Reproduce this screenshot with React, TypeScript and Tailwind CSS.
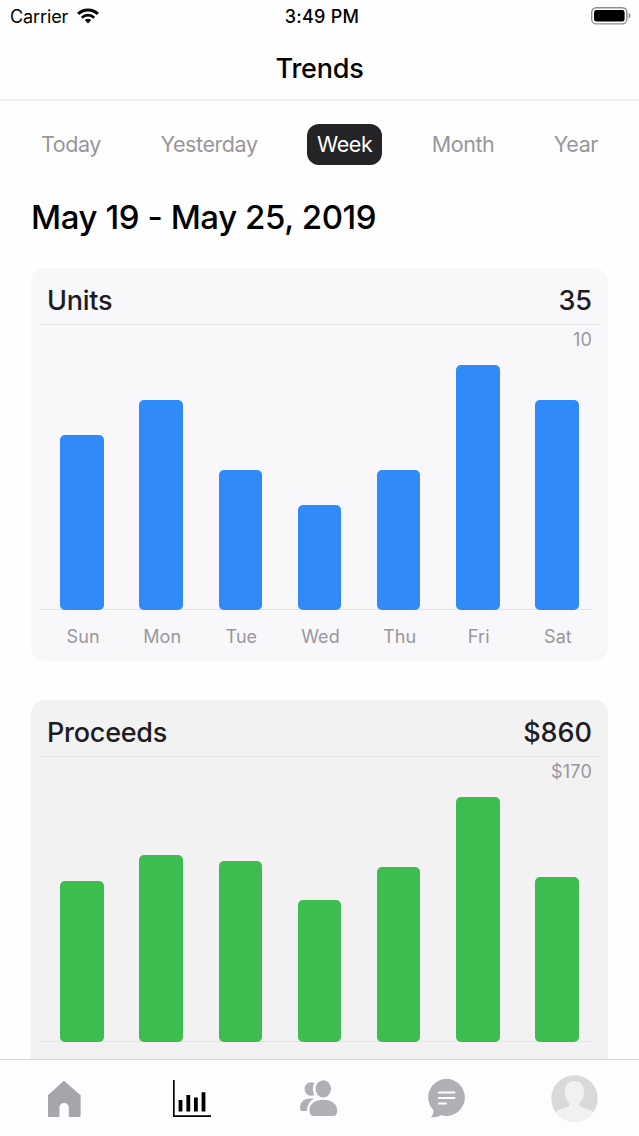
type Bar = { day: string; height: string };

type ChartProps = {
  title: string;
  total: string;
  max: string;
  card: string;
  fill: string;
  bars: Bar[];
  showDays?: boolean;
};

const units: Bar[] = [
  { day: "Sun", height: "h-[175px]" },
  { day: "Mon", height: "h-[210px]" },
  { day: "Tue", height: "h-[140px]" },
  { day: "Wed", height: "h-[105px]" },
  { day: "Thu", height: "h-[140px]" },
  { day: "Fri", height: "h-[245px]" },
  { day: "Sat", height: "h-[210px]" },
];

const proceeds: Bar[] = [
  { day: "Sun", height: "h-[161px]" },
  { day: "Mon", height: "h-[187px]" },
  { day: "Tue", height: "h-[181px]" },
  { day: "Wed", height: "h-[142px]" },
  { day: "Thu", height: "h-[175px]" },
  { day: "Fri", height: "h-[245px]" },
  { day: "Sat", height: "h-[165px]" },
];

const periods = ["Today", "Yesterday", "Week", "Month", "Year"];

function ChartCard({ title, total, max, card, fill, bars, showDays }: ChartProps) {
  return (
    <section className={`h-[393px] w-[577px] shrink-0 rounded-[14px] ${card}`}>
      <div className="mx-[9px] flex h-[57px] items-center justify-between border-b border-[#e3e2e5] px-[7px] pt-[10px] text-[27px] font-[450] leading-8 text-[#1d1c1f]">
        <h2 className="tracking-[-0.25px]">{title}</h2>
        <span>{total}</span>
      </div>
      <div className="h-[29px] pr-[16px] pt-[3px] text-right text-[18px] leading-6 tracking-[0.2px] text-[#98979b]">
        {max}
      </div>
      <div className="ml-[9px] mr-[16px] h-[256px] border-b border-[#e3e2e5]">
        <div className="ml-[2.5px] grid h-[256px] w-[554px] grid-cols-7 items-end justify-items-center">
          {bars.map((b) => (
            <div key={b.day} className={`w-[43.5px] rounded-[5px] ${b.height} ${fill}`} />
          ))}
        </div>
      </div>
      {showDays && (
        <div className="ml-[12.5px] grid w-[554px] grid-cols-7 pt-[15px] text-center text-[18px] leading-6 tracking-[0.1px] text-[#98979b]">
          {bars.map((b) => (
            <span key={b.day}>{b.day}</span>
          ))}
        </div>
      )}
    </section>
  );
}

function WifiIcon() {
  return (
    <svg className="h-[16px] w-[22px]" viewBox="0 0 22 16" fill="none" stroke="#000">
      <path d="M1.1 5.9a14.2 14.2 0 0 1 19.8 0" strokeWidth="3" />
      <path d="M4.8 9.7a9 9 0 0 1 12.4 0" strokeWidth="2.7" />
      <path d="M7.8 12.1a4.8 4.8 0 0 1 6.4 0L11 15.4Z" fill="#000" stroke="none" />
    </svg>
  );
}

function BatteryIcon() {
  return (
    <svg className="h-[18px] w-[41px]" viewBox="0 0 41 18">
      <rect x="0.7" y="0.7" width="35.2" height="16.2" rx="4.6" fill="none" stroke="#8d8d8f" strokeWidth="1.4" />
      <rect x="3" y="3" width="30.6" height="11.6" rx="2.4" fill="#000" />
      <path d="M37.6 6.3c2.6.6 2.6 4.4 0 5Z" fill="#8d8d8f" />
    </svg>
  );
}

function HomeIcon() {
  return (
    <svg className="h-[38px] w-[34px]" viewBox="0 0 34 38" fill="#a6a5a9">
      <path d="M16.9 .8 33.6 15.2V35.7q0 1.3-1.3 1.3H21.8V27.6a4.7 4.7 0 0 0-9.4 0V37H2.2Q1 37 1 35.7V15.2Z" />
    </svg>
  );
}

function ChartIcon() {
  return (
    <svg className="h-[38px] w-[38px]" viewBox="0 0 38 38">
      <path d="M.8 0V36.2H38" fill="none" stroke="#000" strokeWidth="1.7" />
      <path d="M5.6 20H9.4V31.4H5.6ZM13.4 15H17.2V31.4H13.4ZM21 17.4H24.8V31.4H21ZM28.6 12.3H32.4V31.4H28.6Z" fill="#000" />
    </svg>
  );
}

function PeopleIcon() {
  return (
    <svg className="h-[38px] w-[38px]" viewBox="0 0 38 38" fill="#b0afb3">
      <ellipse cx="23.3" cy="9.8" rx="7.7" ry="8.6" />
      <path d="M9.6 30.3C9.6 25 15.2 20.8 23.3 20.8S37.2 25 37.2 31.8C37.2 35.4 35.6 37 32.8 37H13.8C11.2 37 9.6 35.2 9.6 32.3Z" />
      <path d="M14.2 3.7C9.5 1.8 4.6 5 4.6 9.9 4.6 14.8 9.5 18.2 14.2 16 12.4 12.2 12.4 7.5 14.2 3.7Z" />
      <path d="M14 19.8C10 18.8 0 18.9 0 29.5 0 31.2.8 31.9 2.3 31.9H7C7.4 26 9.6 22.3 14 19.8Z" />
    </svg>
  );
}

function ChatIcon() {
  return (
    <svg className="h-[40px] w-[38px]" viewBox="0 0 38 40">
      <path d="M18.8.8A18.6 18.6 0 1 1 13.2 37.3C10 39 6.6 39.5 2.5 39 4.8 37.3 5.6 35.3 5.4 32.3A18.6 18.6 0 0 1 18.8.8Z" fill="#b0afb3" />
      <path d="M10.8 14.6H26.5M10.8 20H26.5M10.8 25.6H18" stroke="#fdfcfe" strokeWidth="2" strokeLinecap="round" />
    </svg>
  );
}

function AvatarIcon() {
  return (
    <svg className="h-[47px] w-[47px]" viewBox="0 0 47 47">
      <defs>
        <clipPath id="avatar">
          <circle cx="23.5" cy="23.5" r="23.2" />
        </clipPath>
      </defs>
      <g clipPath="url(#avatar)">
        <path d="M0 0H47V47H0Z" fill="#d9d8db" />
        <path d="M23.3 6C17.5 6 13.8 10.2 13.8 16.5 13.8 22 15.8 25.5 18.5 28V30.5C16 34 7 33 3.5 38.5L3 47H44.5L43.5 38.5C40 33 31 34 28.3 30.5V28C31 25.5 33 22 33 16.5 33 10.2 29.2 6 23.3 6Z" fill="#f1f1f2" />
      </g>
    </svg>
  );
}

export default function App() {
  return (
    <div className="flex h-[1136px] w-[639px] flex-col overflow-hidden bg-[#fefefe] font-['Inter','Liberation_Sans',sans-serif] text-black">
      <header className="h-[101px] shrink-0 border-b-2 border-[#f0eff4]">
        <div className="grid h-[32px] grid-cols-3 items-center text-[18px] leading-6">
          <div className="flex items-center gap-[9px] pl-[10px]">
            <span className="pt-px tracking-[-0.1px]">Carrier</span>
            <WifiIcon />
          </div>
          <span className="pl-[5px] pt-px text-center font-[550] tracking-[0.25px]">3:49 PM</span>
          <div className="flex justify-end pr-[7px]">
            <BatteryIcon />
          </div>
        </div>
        <h1 className="pt-[21px] text-center text-[27px] font-medium leading-8 tracking-[-0.25px]">Trends</h1>
      </header>

      <nav className="mt-[23px] flex h-[41px] shrink-0 items-center justify-between px-[31px] text-[21.5px] tracking-[-0.42px]">
        {periods.map((p) => (
          <span
            key={p}
            className={`flex h-[41px] items-center rounded-[12px] px-[10px] ${
              p === "Week" ? "bg-[#242326] text-white" : "text-[#98979b]"
            }`}
          >
            {p}
          </span>
        ))}
      </nav>

      <main className="flex min-h-0 flex-1 flex-col overflow-hidden px-[31px]">
        <h2 className="mt-[32px] text-[33px] font-medium leading-10 tracking-[-0.42px]">May 19 - May 25, 2019</h2>
        <div className="mt-[31px] flex flex-col gap-[39px]">
          <ChartCard title="Units" total="35" max="10" card="bg-[#f8f7fa]" fill="bg-[#308bf8]" bars={units} showDays />
          <ChartCard title="Proceeds" total="$860" max="$170" card="bg-[#f3f2f2]" fill="bg-[#3dbd50]" bars={proceeds} />
        </div>
      </main>

      <footer className="flex h-[77px] shrink-0 items-start border-t-[1.5px] border-[#d8d7da] bg-[#fdfcfe]">
        <div className="ml-[47px] mt-[20px]"><HomeIcon /></div>
        <div className="ml-[92px] mt-[20px]"><ChartIcon /></div>
        <div className="ml-[89px] mt-[19px]"><PeopleIcon /></div>
        <div className="ml-[90px] mt-[18px]"><ChatIcon /></div>
        <div className="ml-[85px] mt-[15px]"><AvatarIcon /></div>
      </footer>
    </div>
  );
}
